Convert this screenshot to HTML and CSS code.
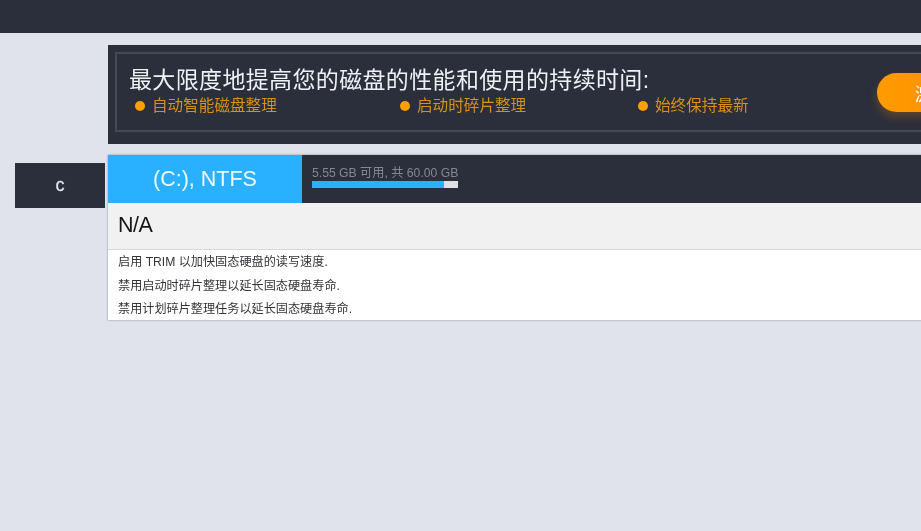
FILE: index.html
```html
<!DOCTYPE html>
<html lang="zh">
<head>
<meta charset="utf-8">
<title>磁盘优化</title>
<link rel="stylesheet" href="styles.css">
</head>
<body>
<header class="topbar"></header>
<section class="banner">
  <div class="banner-inner">
    <div class="banner-text">
      <h1 class="banner-title">最大限度地提高您的磁盘的性能和使用的持续时间:</h1>
      <ul class="features">
        <li class="feature">自动智能磁盘整理</li>
        <li class="feature">启动时碎片整理</li>
        <li class="feature">始终保持最新</li>
      </ul>
    </div>
    <button class="cta">激活</button>
  </div>
</section>
<section class="disk-row">
  <div class="drive-tab">C</div>
  <div class="disk-card">
    <div class="disk-head">
      <div class="disk-name">(C:), NTFS</div>
      <div class="disk-usage">
        <div class="usage-text">5.55 GB 可用, 共 60.00 GB</div>
        <div class="usage-bar"><div class="usage-fill"></div></div>
      </div>
    </div>
    <div class="disk-model">N/A</div>
    <ul class="tips">
      <li>启用 TRIM 以加快固态硬盘的读写速度.</li>
      <li>禁用启动时碎片整理以延长固态硬盘寿命.</li>
      <li>禁用计划碎片整理任务以延长固态硬盘寿命.</li>
    </ul>
  </div>
</section>
</body>
</html>
```
FILE: styles.css
```css
* { box-sizing: border-box; }
html, body { margin: 0; padding: 0; }
html { background: #e0e3eb; }
body {
  width: 921px;
  height: 531px;
  overflow: hidden;
  font-family: "Liberation Sans", "Noto Sans CJK SC", sans-serif;
}
.topbar { height: 33px; background: #2b2e3b; }
.banner {
  margin: 12px -40px 0 108px;
  height: 99px;
  padding: 7px;
  background: #2b2e3b;
  filter: blur(0.6px);
}
.banner-inner {
  height: 80px;
  border: 2px solid #454854;
  padding: 12px 0 0 12px;
  display: flex;
  align-items: flex-start;
}
.banner-text { width: 748px; flex: none; }
.banner-title {
  margin: 0;
  font-size: 23px;
  letter-spacing: 0.35px;
  line-height: 28px;
  font-weight: 400;
  color: #eef0f3;
}
.features {
  list-style: none;
  margin: 2px 0 0;
  padding: 0 0 0 6px;
  display: flex;
  color: #d9920f;
  font-size: 15.6px;
  line-height: 20px;
}
.feature {
  width: 265px;
  display: flex;
  align-items: center;
  gap: 7px;
}
.feature:nth-child(2) { width: 238px; }
.feature:nth-child(3) { width: 200px; }
.feature::before {
  content: "";
  width: 10px;
  height: 10px;
  border-radius: 50%;
  background: #ff9f00;
  flex: none;
}
.cta {
  width: 120px;
  height: 39px;
  margin-top: 7px;
  padding: 0 0 0 38px;
  border: 0;
  border-radius: 20px;
  background: linear-gradient(90deg, #ff9b00, #ff8a00);
  box-shadow: 0 5px 10px rgba(255, 140, 0, .25);
  color: #fff;
  font: inherit;
  font-size: 18px;
  text-align: left;
  flex: none;
}
.disk-row {
  display: flex;
  align-items: flex-start;
  margin: 11px -40px 0 15px;
  filter: blur(0.6px);
}
.drive-tab {
  width: 90px;
  height: 45px;
  margin: 8px 3px 0 0;
  background: #2b2e3b;
  color: #dfe1e6;
  font-size: 18px;
  -webkit-text-stroke: 0.3px #dfe1e6;
  line-height: 45px;
  text-align: center;
  text-transform: lowercase;
}
.disk-card {
  flex: 1;
  height: 165px;
  background: #fff;
  box-shadow: 0 0 2px rgba(60, 65, 80, .55);
}
.disk-head { height: 48px; display: flex; background: #2b2e3b; }
.disk-name {
  width: 194px;
  background: #29b1ff;
  color: #eef8ff;
  font-size: 21.5px;
  line-height: 48px;
  text-align: center;
}
.disk-usage { padding: 11px 0 0 10px; }
.usage-text { font-size: 12.2px; line-height: 15px; color: #858893; white-space: nowrap; }
.usage-bar { width: 146px; height: 7px; background: #e0e0e2; }
.usage-fill { width: 90.3%; height: 100%; background: #29b1ff; }
.disk-model {
  height: 47px;
  padding-left: 10px;
  background: #f1f1f2;
  border-bottom: 1px solid #d8d8da;
  color: #15161a;
  font-size: 21.5px;
  letter-spacing: -0.5px;
  line-height: 45px;
}
.tips {
  list-style: none;
  margin: 0;
  padding: 1px 0 0 10px;
  color: #33343a;
  font-size: 12.15px;
  line-height: 23.5px;
}
```
